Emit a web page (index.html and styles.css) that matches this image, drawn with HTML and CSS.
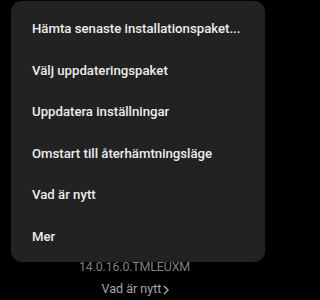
FILE: index.html
```html
<!DOCTYPE html>
<html lang="sv">
<head>
<meta charset="utf-8">
<link rel="stylesheet" href="styles.css">
</head>
<body>
<div class="screen">
  <div class="info">
    <div class="version">14.0.16.0.TMLEUXM</div>
    <div class="whatsnew">Vad är nytt<svg class="chev" width="6" height="10" viewBox="0 0 6 10"><path d="M1 1 L5 5 L1 9" fill="none" stroke="currentColor" stroke-width="1.4"/></svg></div>
  </div>
  <ul class="menu">
    <li>Hämta senaste installationspaket...</li>
    <li>Välj uppdateringspaket</li>
    <li>Uppdatera inställningar</li>
    <li>Omstart till återhämtningsläge</li>
    <li>Vad är nytt</li>
    <li>Mer</li>
  </ul>
</div>
</body>
</html>
```
FILE: styles.css
```css
html, body {
  margin: 0;
  padding: 0;
  background: #000;
}
.screen {
  position: relative;
  width: 268px;
  height: 300px;
  overflow: hidden;
  background: #000;
  font-family: Roboto, "Noto Sans", sans-serif;
}
.info {
  display: flex;
  flex-direction: column;
  align-items: center;
  padding-top: 258px;
  padding-left: 1px;
}
.version {
  font-size: 12.5px;
  color: #7f7f7f;
  line-height: 18px;
  letter-spacing: -0.2px;
}
.whatsnew {
  margin-top: 4px;
  font-size: 12.5px;
  line-height: 18px;
  color: #a8a8a8;
  display: flex;
  align-items: center;
  gap: 2px;
  padding-left: 2px;
}
.chev {
  margin-top: 1px;
}
.menu {
  position: absolute;
  left: 11px;
  top: 1px;
  width: 254px;
  height: 261px;
  margin: 0;
  padding: 7px 0 0 0;
  box-sizing: border-box;
  list-style: none;
  background: #222222;
  border-radius: 11px;
}
.menu li {
  height: 41.5px;
  line-height: 41.5px;
  padding-left: 21px;
  font-size: 13.2px;
  font-weight: 500;
  color: #ececec;
  white-space: nowrap;
}
```
